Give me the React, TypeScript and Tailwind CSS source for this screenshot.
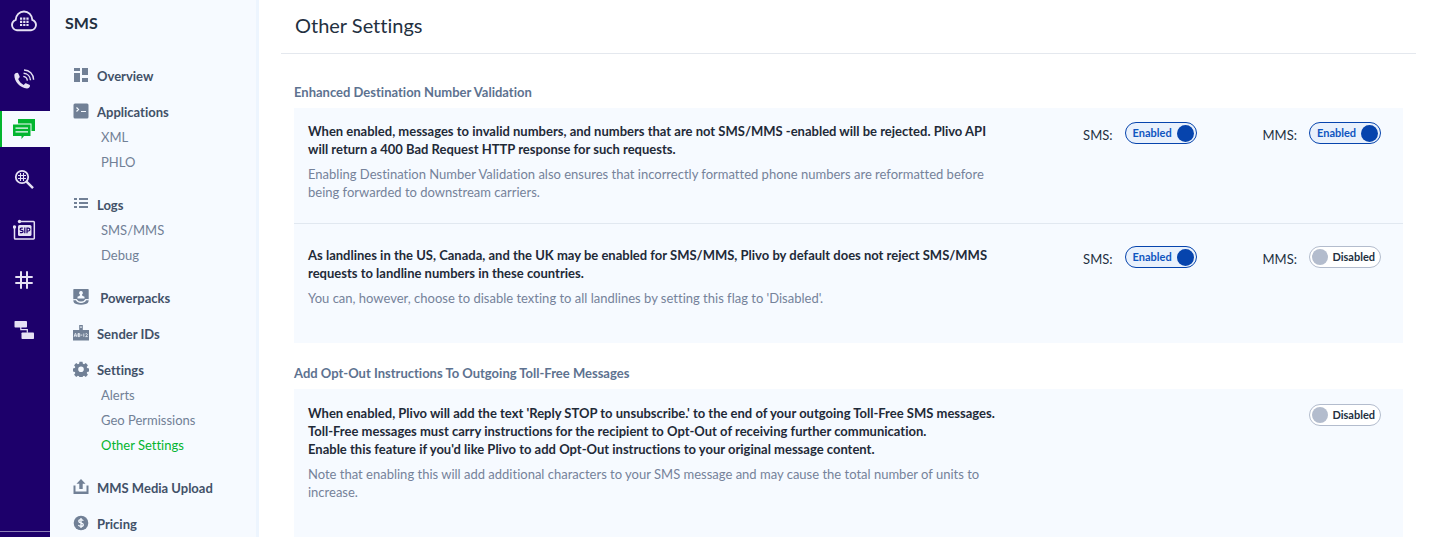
import { useState, type ReactNode } from "react";
import clsx from "clsx";

interface NavItem {
  label: string;
  icon: ReactNode;
  children?: string[];
}

interface ToggleProps {
  label?: string;
  name: string;
  defaultOn?: boolean;
}

interface SettingRowProps {
  title: string;
  note: string;
  className?: string;
  children: ReactNode;
}

const railItems = [
  {
    name: "Voice",
    icon: (
      <svg viewBox="1 -1 24 24" className="size-6" fill="none" stroke="currentColor" aria-hidden="true">
        <path
          d="M2.300 6.800c.5-1.300 1.700-2.200 3-2.100.5 0 .8.300 1 .7l1.300 2.900c.2.500.1 1-.3 1.400l-1.100 1.200c1 2.500 3 4.700 5.500 6l1.400-1.300c.4-.3.9-.4 1.300-.2l3 1.400c.5.200.7.700.6 1.200-.3 1.500-1.600 2.500-3.100 2.400C8.200 20.200 2.100 13.700 2.300 6.800Z"
          fill="currentColor"
          stroke="none"
        />
        <path d="M11.300 8.400c2.200.3 3.800 1.900 4.100 4.200M11.600 5.200c3.900.3 6.700 3.200 6.900 7M12 2c5.500.2 9.400 4.200 9.600 9.700" strokeWidth="1.400" />
      </svg>
    ),
  },
  {
    name: "SMS",
    icon: (
      <svg viewBox="1 0 24 24" className="size-6" fill="currentColor" aria-hidden="true">
        <path d="M6 2h17v12h-3.500V6.500H6Z" />
        <path fillRule="evenodd" d="M1 7.500h17.500v11.500H12L9.500 22V19H1ZM3.500 10.500v1.300h12.500v-1.300Zm0 3.700v1.300h12.500v-1.300Z" />
      </svg>
    ),
  },
  {
    name: "Lookup",
    icon: (
      <svg viewBox="1 -1 24 24" className="size-6" fill="none" stroke="currentColor" aria-hidden="true">
        <circle cx="10" cy="9" r="6.200" strokeWidth="1.800" />
        <path d="m14.500 13.700 6.500 6.500" strokeWidth="2.500" />
        <path d="M8.500 5v8M11.500 5v8M6 7.500h8M6 10.500h8" strokeWidth="1.100" />
      </svg>
    ),
  },
  {
    name: "SIP Trunking",
    icon: (
      <svg viewBox="1 -1 24 24" className="size-6" fill="none" stroke="currentColor" aria-hidden="true">
        <path d="M7 3.500h14.500a.8.8 0 0 1 .8.800v15.900a.8.8 0 0 1-.8.800H3.300a.8.8 0 0 1-.8-.8V9" strokeWidth="1.500" />
        <circle cx="7.500" cy="3.500" r="1.700" fill="currentColor" stroke="none" />
        <circle cx="2.500" cy="9" r="1.700" fill="currentColor" stroke="none" />
        <rect x="6" y="7" width="13.500" height="11" rx="1.500" fill="currentColor" stroke="none" />
        <path
          d="M10.800 10.100H9.300a1.100 1.100 0 0 0 0 2.300h.6a1.100 1.100 0 0 1 0 2.300H7.900M12.800 9.500v5.800M15 15.300v-5.200h1.400a1.400 1.400 0 0 1 0 2.900H15"
          stroke="#1d006b"
          strokeWidth="1.200"
        />
      </svg>
    ),
  },
  {
    name: "Phone Numbers",
    icon: (
      <svg viewBox="1 -1 24 24" className="size-6" fill="none" stroke="currentColor" aria-hidden="true">
        <path d="M9 3.300v17.400M15 3.300v17.400M3.300 9h17.400M3.300 15h17.400" strokeWidth="2" />
      </svg>
    ),
  },
  {
    name: "PHLO",
    icon: (
      <svg viewBox="1 -1 24 24" className="size-6" fill="none" stroke="currentColor" aria-hidden="true">
        <rect x="2.500" y="3" width="12.500" height="6.500" rx=".8" fill="currentColor" stroke="none" />
        <rect x="9.500" y="14.500" width="12.500" height="6.500" rx=".8" fill="currentColor" stroke="none" />
        <path d="M8.800 9v2.700h6.500v3" strokeWidth="1.200" />
      </svg>
    ),
  },
];

const navItems: NavItem[] = [
  {
    label: "Overview",
    icon: <path d="M0 0h6v3H0zM8 0h6v7H8zM0 5h6v9H0zM8 10h6v4H8z" transform="translate(1 1)" />,
  },
  {
    label: "Applications",
    icon: (
      <>
        <rect x=".5" y=".5" width="15" height="15" rx="1.500" />
        <path d="m3.500 4.500 2 2-2 2M8 8.500h5" fill="none" stroke="#f6faff" strokeWidth="1.200" />
      </>
    ),
    children: ["XML", "PHLO"],
  },
  {
    label: "Logs",
    icon: <path d="M1 2h3v2H1zM6 2h9v2H6zM1 6h3v2H1zM6 6h9v2H6zM1 10h3v2H1zM6 10h9v2H6z" />,
    children: ["SMS/MMS", "Debug"],
  },
  {
    label: "\u00a0Powerpacks",
    icon: (
      <>
        <path d="M1 0h14a.7.700 0 0 1 .7.700V10.500h-3.500c-.5 1.500-2.200 2.500-4.200 2.500s-3.700-1-4.200-2.500H.3V.700A.7.700 0 0 1 1 0Z" />
        <path d="M.3 11.200h2.600c.9 1.700 2.800 2.800 5.100 2.800s4.200-1.100 5.100-2.800h2.600c0 2-1 3.200-3 3.900-2.800.8-6.600.8-9.400 0-2-.7-3-1.900-3-3.900Z" />
        <path d="M.3 10.500h3.400c.7 1.600 2.300 2.500 4.300 2.500s3.600-.9 4.300-2.500h3.400" fill="none" stroke="#f6faff" strokeWidth=".9" />
        <path d="M8 2a1.900 1.900 0 0 1 1 3.500l.3 1.300 2.200 1V9.500h-7V7.800l2.200-1L7 5.500A1.900 1.900 0 0 1 8 2Z" fill="#f6faff" />
      </>
    ),
  },
  {
    label: "Sender IDs",
    icon: (
      <>
        <path d="M6.200 0h3.600v5H16v10.500H0V5h6.200Zm1.200 1.300v1.700h1.200V1.300Z" fillRule="evenodd" />
        <path
          d="m1.200 11.800 1-3.300h.5l1 3.300M1.600 10.800h1.700M5 8.500v3.100h1.300a.8.8 0 0 0 0-1.600H5h1.200a.7.700 0 0 0 0-1.500ZM8 10.100h1.300M10.800 8.500v3.300M12.500 8.900c.9-.8 2.300 0 1.700 1.200l-1.600 1.500h2.200"
          fill="none"
          stroke="#f6faff"
          strokeWidth=".8"
        />
      </>
    ),
  },
  {
    label: "Settings",
    icon: (
      <path
        fillRule="evenodd"
        d="M6.500.800h3l.4 2 1.200.500 1.700-1.200 2.100 2.100-1.200 1.700.500 1.200 2 .4v3l-2 .4-.5 1.200 1.200 1.700-2.100 2.100-1.700-1.200-1.200.5-.4 2h-3l-.4-2-1.200-.5-1.700 1.200-2.100-2.100 1.200-1.700-.5-1.200-2-.4v-3l2-.4.5-1.200-1.200-1.700 2.100-2.100 1.700 1.200 1.200-.5ZM8 5.500a2.800 2.800 0 1 0 0 5.600 2.800 2.800 0 0 0 0-5.600Z"
      />
    ),
    children: ["Alerts", "Geo Permissions", "Other Settings"],
  },
  {
    label: "MMS Media Upload",
    icon: <path d="M8 0l4.500 4.800h-2.800V10H6.300V4.800H3.500ZM.5 6.500h2v6h11v-6h2V15H.5Z" />,
  },
  {
    label: "Pricing",
    icon: (
      <>
        <circle cx="8" cy="8" r="7.300" />
        <path
          d="M10.300 5.800C9.800 4.900 9 4.600 8 4.600c-1.300 0-2.200.6-2.200 1.600 0 2.300 4.500 1.200 4.500 3.500 0 1.100-1 1.700-2.300 1.700-1.200 0-2.100-.4-2.600-1.400M8 3v10"
          fill="none"
          stroke="#f6faff"
          strokeWidth="1.300"
        />
      </>
    ),
  },
];

const Rail = () => (
  <nav aria-label="Products" className="flex w-[50px] shrink-0 flex-col items-center bg-[#1d006b] text-[#e6e1f4]">
    <a href="#home" aria-label="Home" className="flex h-[61px] w-full justify-center pt-2">
      <svg viewBox="1 0 28 24" className="h-6 w-7" fill="none" aria-hidden="true">
        <path
          d="M7 22.200a5.500 5.500 0 0 1-5-5.200c0-2.500 1.500-4.300 3.700-5.200C5.900 7 9.500 3.500 14 3.500s8.100 3.500 8.300 8.300c2.200.9 3.700 2.700 3.700 5.200a5.500 5.500 0 0 1-5 5.200Z"
          stroke="currentColor"
          strokeWidth="1.900"
        />
        <path
          d="M10 9.500h2.200v2.200H10zM13.200 9.500h2.200v2.200h-2.200zM16.400 9.500h2.200v2.200h-2.200zM10 12.700h2.200v2.200H10zM13.200 12.700h2.200v2.200h-2.200zM16.400 12.700h2.200v2.200h-2.200zM10 15.900h2.200v2.200H10zM13.200 15.900h2.200v2.200h-2.200zM16.400 15.900h2.200v2.200h-2.200z"
          fill="currentColor"
        />
      </svg>
    </a>
    <div className="flex w-full flex-col gap-[14px]">
      {railItems.map((item) => (
        <a
          key={item.name}
          href="#product"
          aria-label={item.name}
          className={clsx(
            "flex h-9 items-center justify-center",
            item.name === "SMS" && "border-l-2 border-[#03b52f] bg-[#f6faff] pr-[2px] text-[#03b52f]"
          )}
        >
          {item.icon}
        </a>
      ))}
    </div>
    <div className="mt-auto h-[6px] w-full border-t border-[#8b7fb5]" />
  </nav>
);

const Sidebar = () => (
  <aside className="w-[209px] shrink-0 border-r-3 border-[#edf5fe] bg-[#f6faff]">
    <h2 className="pt-[11px] pl-[15px] text-base leading-6 font-bold text-[#23303f]">SMS</h2>
    <ul className="mt-[29px]">
      {navItems.map((item) => (
        <li key={item.label} className={item.children ? "mb-[18px]" : "mb-[11px]"}>
          <a href="#section" className="flex h-[25px] items-center gap-2 pl-[23px] text-[13px] font-bold text-[#425168]">
            <svg viewBox="0 0 16 16" className="mb-1 size-4 text-[#718096]" fill="currentColor" aria-hidden="true">
              {item.icon}
            </svg>
            {item.label}
          </a>
          {item.children && (
            <ul>
              {item.children.map((child) => (
                <li key={child}>
                  <a
                    href="#page"
                    className={clsx(
                      "flex h-[25px] items-center pl-[51px] text-[13px]",
                      child === "Other Settings" ? "text-[#03b52f]" : "text-[#718096]"
                    )}
                  >
                    {child}
                  </a>
                </li>
              ))}
            </ul>
          )}
        </li>
      ))}
    </ul>
  </aside>
);

const Toggle = ({ label, name, defaultOn = false }: ToggleProps) => {
  const [on, setOn] = useState(defaultOn);

  return (
    <label className="flex cursor-pointer items-start gap-3">
      {label && <span className="pt-1 text-[13px] leading-[18px] text-[#23303f]">{label}</span>}
      <input
        type="checkbox"
        role="switch"
        aria-label={name}
        checked={on}
        onChange={() => setOn(!on)}
        className="sr-only"
      />
      <span
        className={clsx(
          "flex h-[22px] w-[72px] items-center justify-between rounded-full border text-[11px] font-bold",
          on
            ? "border-[#0644ad] bg-[#e9f1fc] pr-[2px] pl-[7px] text-[#0f55c0]"
            : "flex-row-reverse border-[#b3bccd] bg-white pr-[5px] pl-[2px] text-[#23303f]"
        )}
      >
        {on ? "Enabled" : "Disabled"}
        <span className={clsx("rounded-full", on ? "size-[17px] bg-[#0644ad]" : "size-4 bg-[#b3bccd]")} />
      </span>
    </label>
  );
};

const SettingRow = ({ title, note, className, children }: SettingRowProps) => (
  <div className={clsx("flex justify-between pr-[22px] pl-[14px]", className)}>
    <div className="text-[13px] leading-[18px] whitespace-pre-line">
      <p className="font-bold text-[#1f2a38]">{title}</p>
      <p className="mt-[7px] text-[#75829a]">{note}</p>
    </div>
    <div className="flex shrink-0 items-start gap-[66px]">{children}</div>
  </div>
);

const App = () => {
  return (
    <div className="flex h-screen overflow-hidden bg-white font-['Lato',sans-serif] [font-variant-ligatures:none]">
      <Rail />
      <Sidebar />
      <main className="min-w-0 flex-1 pr-[17px] pl-[22px]">
        <header className="border-b border-[#e4e8ee] pt-[11px] pb-[14px] pl-[14px]">
          <h1 className="text-xl leading-7 text-[#23303f]">Other Settings</h1>
        </header>

        <section className="pt-7 pr-[13px] pl-[13px]">
          <h2 className="text-[13px] leading-5 font-bold text-[#5d7290]">Enhanced Destination Number Validation</h2>
          <div className="mt-[6px] bg-[#f6faff]">
            <SettingRow
              className="border-b border-[#e1e8f0] pt-[14px] pb-[22px]"
              title={
                "When enabled, messages to invalid numbers, and numbers that are not SMS/MMS -enabled will be rejected. Plivo API\nwill return a 400 Bad Request HTTP response for such requests."
              }
              note={
                "Enabling Destination Number Validation also ensures that incorrectly formatted phone numbers are reformatted before\nbeing forwarded to downstream carriers."
              }
            >
              <Toggle label="SMS:" name="SMS number validation" defaultOn />
              <Toggle label="MMS:" name="MMS number validation" defaultOn />
            </SettingRow>
            <SettingRow
              className="pt-[22px] pb-9"
              title={
                "As landlines in the US, Canada, and the UK may be enabled for SMS/MMS, Plivo by default does not reject SMS/MMS\nrequests to landline numbers in these countries."
              }
              note="You can, however, choose to disable texting to all landlines by setting this flag to 'Disabled'."
            >
              <Toggle label="SMS:" name="SMS to landlines" defaultOn />
              <Toggle label="MMS:" name="MMS to landlines" />
            </SettingRow>
          </div>
        </section>

        <section className="pt-5 pr-[13px] pl-[13px]">
          <h2 className="text-[13px] leading-5 font-bold text-[#5d7290]">
            Add Opt-Out Instructions To Outgoing Toll-Free Messages
          </h2>
          <div className="mt-[6px] bg-[#f6faff]">
            <SettingRow
              className="pt-[15px] pb-12"
              title={
                "When enabled, Plivo will add the text 'Reply STOP to unsubscribe.' to the end of your outgoing Toll-Free SMS messages.\nToll-Free messages must carry instructions for the recipient to Opt-Out of receiving further communication.\nEnable this feature if you'd like Plivo to add Opt-Out instructions to your original message content."
              }
              note={
                "Note that enabling this will add additional characters to your SMS message and may cause the total number of units to\nincrease."
              }
            >
              <Toggle name="Opt-out instructions" />
            </SettingRow>
          </div>
        </section>
      </main>
    </div>
  );
};

export default App;
